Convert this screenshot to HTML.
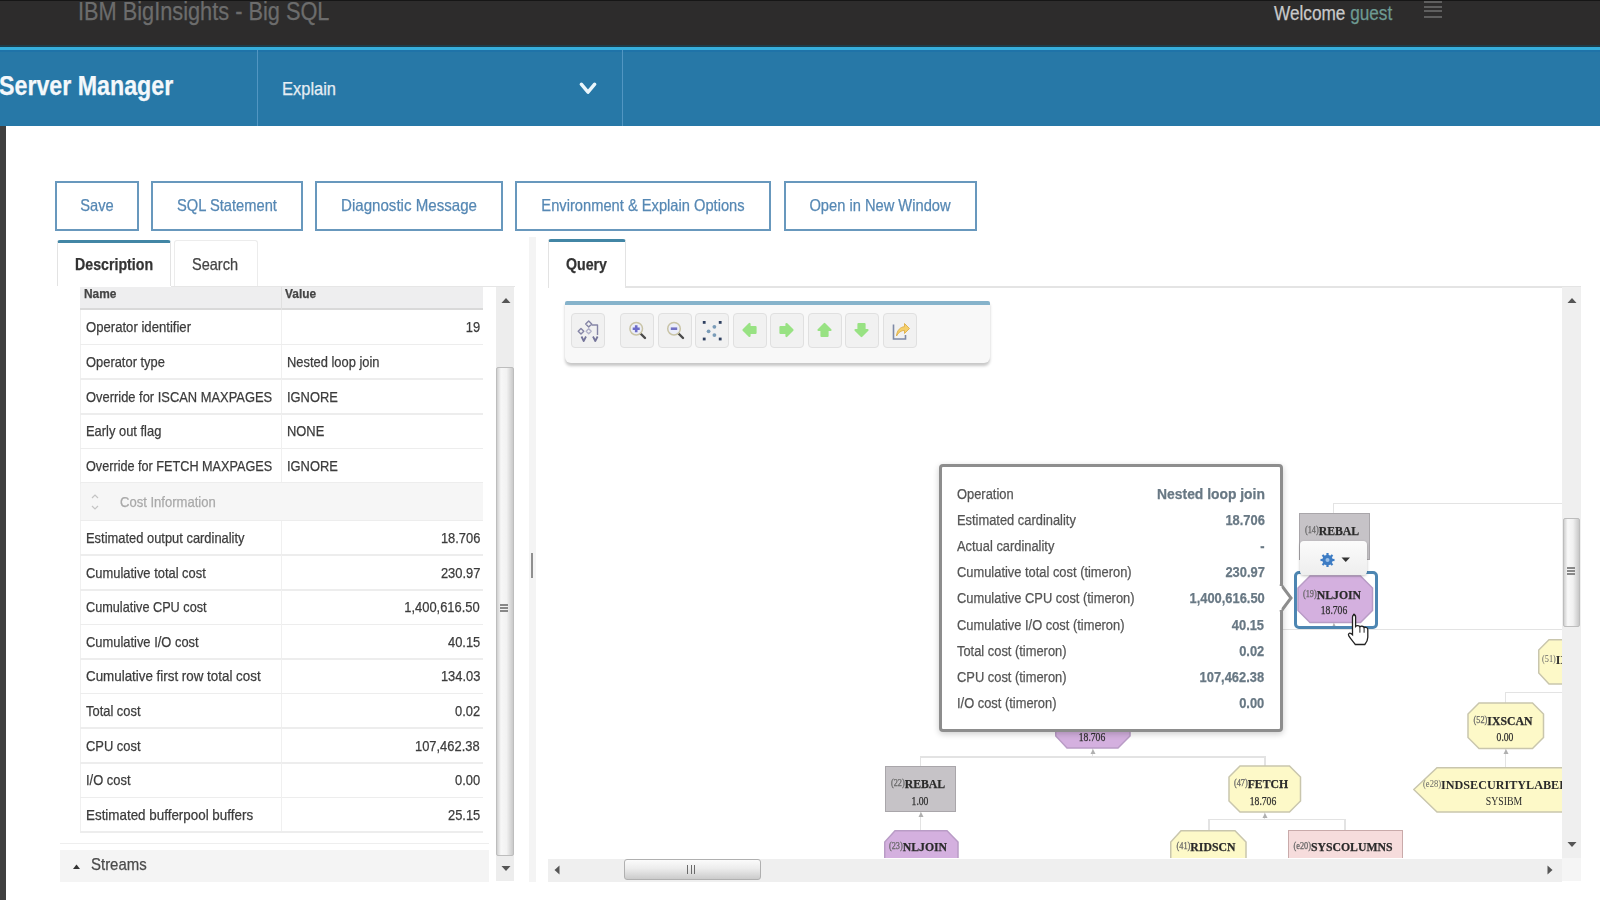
<!DOCTYPE html>
<html><head><meta charset="utf-8"><title>IBM BigInsights - Big SQL</title>
<style>
html,body{margin:0;padding:0;width:1600px;height:900px;overflow:hidden;background:#fff;}
body{position:relative;font-family:"Liberation Sans",sans-serif;}
.b{position:absolute;}
.t{position:absolute;white-space:nowrap;-webkit-text-stroke:0.25px currentColor;}
#wrap{position:absolute;left:0;top:0;width:1600px;height:900px;overflow:hidden;filter:blur(0.5px);}
</style></head><body><div id="wrap">
<div class="b" style="left:0px;top:0px;width:1600px;height:46px;background:#2d2c2c;"></div>
<div class="b" style="left:0px;top:44.5px;width:1600px;height:2.0px;background:#1d3d4a;"></div>
<div class="b" style="left:0px;top:46.5px;width:1600px;height:3.5px;background:#36afdd;"></div>
<div class="b" style="left:0px;top:50px;width:1600px;height:76px;background:#2778a7;"></div>
<div class="b" style="left:0px;top:50px;width:1600px;height:2px;background:#1f73a8;"></div>
<div class="b" style="left:257px;top:50px;width:1px;height:76px;background:#5296c2;"></div>
<div class="b" style="left:622px;top:50px;width:1px;height:76px;background:#5296c2;"></div>
<div class="b" style="left:0px;top:126px;width:6px;height:774px;background:#3f3f3f;"></div>
<div class="t" style="left:77.5px;top:-1.16px;font-size:25px;line-height:25px;color:#6c6c6c;font-weight:normal;font-family:'Liberation Sans',serif;transform:scaleX(0.87);transform-origin:left;">IBM BigInsights - Big SQL</div>
<div class="t" style="left:1274px;top:3.07px;font-size:20px;line-height:20px;color:#c9c9c9;font-weight:normal;font-family:'Liberation Sans',serif;transform:scaleX(0.86);transform-origin:left;">Welcome <span style="color:#6d9a92">guest</span></div>
<div class="b" style="left:1424px;top:1px;width:18px;height:2px;background:#5f5f5f;"></div>
<div class="b" style="left:1424px;top:6.2px;width:18px;height:1.9999999999999991px;background:#5f5f5f;"></div>
<div class="b" style="left:1424px;top:10.3px;width:18px;height:2.0px;background:#5f5f5f;"></div>
<div class="b" style="left:1424px;top:16px;width:18px;height:2px;background:#5f5f5f;"></div>
<div class="b" style="left:0px;top:0px;width:1600px;height:1px;background:#161616;"></div>
<div class="t" style="left:-1px;top:72.74px;font-size:27px;line-height:27px;color:#f4f8fb;font-weight:bold;font-family:'Liberation Sans',serif;transform:scaleX(0.86);transform-origin:left;">Server Manager</div>
<div class="t" style="left:282px;top:79.32px;font-size:19px;line-height:19px;color:#e6eef4;font-weight:normal;font-family:'Liberation Sans',serif;transform:scaleX(0.867);transform-origin:left;">Explain</div>
<svg class="b" style="left:577px;top:79px" width="22" height="18" viewBox="0 0 22 18"><polyline points="4.3,5.2 11,13.2 17.7,5.2" fill="none" stroke="#eaf6fc" stroke-width="3.4" stroke-linecap="round" stroke-linejoin="round"/></svg>
<div class="b" style="left:55px;top:181px;width:84px;height:50px;border:2px solid #6898bd;box-sizing:border-box;background:#fff;"></div>
<div class="t" style="left:97.0px;top:197.43px;font-size:16.5px;line-height:16.5px;color:#5688b4;font-weight:normal;font-family:'Liberation Sans',serif;transform:translateX(-50%) scaleX(0.89);transform-origin:center;">Save</div>
<div class="b" style="left:151px;top:181px;width:151.5px;height:50px;border:2px solid #6898bd;box-sizing:border-box;background:#fff;"></div>
<div class="t" style="left:226.75px;top:197.43px;font-size:16.5px;line-height:16.5px;color:#5688b4;font-weight:normal;font-family:'Liberation Sans',serif;transform:translateX(-50%) scaleX(0.89);transform-origin:center;">SQL Statement</div>
<div class="b" style="left:315px;top:181px;width:187.5px;height:50px;border:2px solid #6898bd;box-sizing:border-box;background:#fff;"></div>
<div class="t" style="left:408.75px;top:197.43px;font-size:16.5px;line-height:16.5px;color:#5688b4;font-weight:normal;font-family:'Liberation Sans',serif;transform:translateX(-50%) scaleX(0.915);transform-origin:center;">Diagnostic Message</div>
<div class="b" style="left:515px;top:181px;width:256px;height:50px;border:2px solid #6898bd;box-sizing:border-box;background:#fff;"></div>
<div class="t" style="left:643.0px;top:197.43px;font-size:16.5px;line-height:16.5px;color:#5688b4;font-weight:normal;font-family:'Liberation Sans',serif;transform:translateX(-50%) scaleX(0.89);transform-origin:center;">Environment &amp; Explain Options</div>
<div class="b" style="left:783.5px;top:181px;width:193.5px;height:50px;border:2px solid #6898bd;box-sizing:border-box;background:#fff;"></div>
<div class="t" style="left:880.25px;top:197.43px;font-size:16.5px;line-height:16.5px;color:#5688b4;font-weight:normal;font-family:'Liberation Sans',serif;transform:translateX(-50%) scaleX(0.89);transform-origin:center;">Open in New Window</div>
<div class="b" style="left:57px;top:240px;width:114px;height:48px;border:1px solid #e3e3e3;border-top:3px solid #4286a5;border-bottom:none;box-sizing:border-box;background:#fff;border-radius:3px 3px 0 0;"></div>
<div class="b" style="left:174px;top:240px;width:84px;height:47px;border:1px solid #ececec;border-bottom:none;box-sizing:border-box;background:#fff;border-radius:3px 3px 0 0;"></div>
<div class="b" style="left:57px;top:286px;width:458px;height:1px;background:#e6e6e6;"></div>
<div class="b" style="left:57px;top:286px;width:114px;height:2px;background:#fff;"></div>
<div class="t" style="left:74.75px;top:255.78px;font-size:16.5px;line-height:16.5px;color:#333;font-weight:bold;font-family:'Liberation Sans',serif;transform:scaleX(0.86);transform-origin:left;">Description</div>
<div class="t" style="left:192px;top:255.78px;font-size:16.5px;line-height:16.5px;color:#444;font-weight:normal;font-family:'Liberation Sans',serif;transform:scaleX(0.88);transform-origin:left;">Search</div>
<div class="b" style="left:80px;top:287px;width:403px;height:23px;background:#eeeeef;border-bottom:2px solid #d9d9d9;box-sizing:border-box;"></div>
<div class="b" style="left:281px;top:287px;width:1px;height:23px;background:#e0e0e0;"></div>
<div class="t" style="left:83.5px;top:287.07px;font-size:13.5px;line-height:13.5px;color:#444;font-weight:bold;font-family:'Liberation Sans',serif;transform:scaleX(0.88);transform-origin:left;">Name</div>
<div class="t" style="left:285px;top:287.07px;font-size:13.5px;line-height:13.5px;color:#444;font-weight:bold;font-family:'Liberation Sans',serif;transform:scaleX(0.88);transform-origin:left;">Value</div>
<div class="b" style="left:80px;top:310px;width:1px;height:521px;background:#f0f0f0;"></div>
<div class="b" style="left:281px;top:310.0px;width:1px;height:34.60000000000002px;background:#f0f0f0;"></div>
<div class="t" style="left:85.8px;top:320.48px;font-size:14.5px;line-height:14.5px;color:#3c3c3c;font-weight:normal;font-family:'Liberation Sans',serif;transform:scaleX(0.905);transform-origin:left;">Operator identifier</div>
<div class="t" style="right:1120px;top:320.48px;font-size:14.5px;line-height:14.5px;color:#3c3c3c;font-weight:normal;font-family:'Liberation Sans',serif;transform:scaleX(0.89);transform-origin:right;">19</div>
<div class="b" style="left:80px;top:343.85px;width:403px;height:1.5px;background:#ededed;"></div>
<div class="b" style="left:281px;top:344.6px;width:1px;height:34.60000000000002px;background:#f0f0f0;"></div>
<div class="t" style="left:85.8px;top:355.08px;font-size:14.5px;line-height:14.5px;color:#3c3c3c;font-weight:normal;font-family:'Liberation Sans',serif;transform:scaleX(0.89);transform-origin:left;">Operator type</div>
<div class="t" style="left:286.5px;top:355.08px;font-size:14.5px;line-height:14.5px;color:#3c3c3c;font-weight:normal;font-family:'Liberation Sans',serif;transform:scaleX(0.89);transform-origin:left;">Nested loop join</div>
<div class="b" style="left:80px;top:378.45000000000005px;width:403px;height:1.5px;background:#ededed;"></div>
<div class="b" style="left:281px;top:379.20000000000005px;width:1px;height:34.60000000000002px;background:#f0f0f0;"></div>
<div class="t" style="left:85.8px;top:389.68px;font-size:14.5px;line-height:14.5px;color:#3c3c3c;font-weight:normal;font-family:'Liberation Sans',serif;transform:scaleX(0.89);transform-origin:left;">Override for ISCAN MAXPAGES</div>
<div class="t" style="left:286.5px;top:389.68px;font-size:14.5px;line-height:14.5px;color:#3c3c3c;font-weight:normal;font-family:'Liberation Sans',serif;transform:scaleX(0.89);transform-origin:left;">IGNORE</div>
<div class="b" style="left:80px;top:413.05000000000007px;width:403px;height:1.5px;background:#ededed;"></div>
<div class="b" style="left:281px;top:413.80000000000007px;width:1px;height:34.60000000000002px;background:#f0f0f0;"></div>
<div class="t" style="left:85.8px;top:424.28px;font-size:14.5px;line-height:14.5px;color:#3c3c3c;font-weight:normal;font-family:'Liberation Sans',serif;transform:scaleX(0.89);transform-origin:left;">Early out flag</div>
<div class="t" style="left:286.5px;top:424.28px;font-size:14.5px;line-height:14.5px;color:#3c3c3c;font-weight:normal;font-family:'Liberation Sans',serif;transform:scaleX(0.89);transform-origin:left;">NONE</div>
<div class="b" style="left:80px;top:447.6500000000001px;width:403px;height:1.5px;background:#ededed;"></div>
<div class="b" style="left:281px;top:448.4000000000001px;width:1px;height:34.60000000000002px;background:#f0f0f0;"></div>
<div class="t" style="left:85.8px;top:458.88px;font-size:14.5px;line-height:14.5px;color:#3c3c3c;font-weight:normal;font-family:'Liberation Sans',serif;transform:scaleX(0.873);transform-origin:left;">Override for FETCH MAXPAGES</div>
<div class="t" style="left:286.5px;top:458.88px;font-size:14.5px;line-height:14.5px;color:#3c3c3c;font-weight:normal;font-family:'Liberation Sans',serif;transform:scaleX(0.89);transform-origin:left;">IGNORE</div>
<div class="b" style="left:80px;top:482.2500000000001px;width:403px;height:1.5px;background:#ededed;"></div>
<div class="b" style="left:81px;top:483.0000000000001px;width:402px;height:37.60000000000002px;background:#f6f6f6;"></div>
<div class="t" style="left:119.5px;top:495.23px;font-size:14.5px;line-height:14.5px;color:#a9a9a9;font-weight:normal;font-family:'Liberation Sans',serif;transform:scaleX(0.9);transform-origin:left;">Cost Information</div>
<svg class="b" style="left:89px;top:492.0px" width="12" height="20" viewBox="0 0 12 20"><polyline points="3,6 6,3 9,6" fill="none" stroke="#c4c4c4" stroke-width="1.2"/><polyline points="3,14 6,17 9,14" fill="none" stroke="#c4c4c4" stroke-width="1.2"/></svg>
<div class="b" style="left:80px;top:519.8500000000001px;width:403px;height:1.5px;background:#ededed;"></div>
<div class="b" style="left:281px;top:520.6000000000001px;width:1px;height:34.60000000000002px;background:#f0f0f0;"></div>
<div class="t" style="left:85.8px;top:531.08px;font-size:14.5px;line-height:14.5px;color:#3c3c3c;font-weight:normal;font-family:'Liberation Sans',serif;transform:scaleX(0.89);transform-origin:left;">Estimated output cardinality</div>
<div class="t" style="right:1120px;top:531.08px;font-size:14.5px;line-height:14.5px;color:#3c3c3c;font-weight:normal;font-family:'Liberation Sans',serif;transform:scaleX(0.89);transform-origin:right;">18.706</div>
<div class="b" style="left:80px;top:554.4500000000002px;width:403px;height:1.5px;background:#ededed;"></div>
<div class="b" style="left:281px;top:555.2000000000002px;width:1px;height:34.60000000000002px;background:#f0f0f0;"></div>
<div class="t" style="left:85.8px;top:565.68px;font-size:14.5px;line-height:14.5px;color:#3c3c3c;font-weight:normal;font-family:'Liberation Sans',serif;transform:scaleX(0.89);transform-origin:left;">Cumulative total cost</div>
<div class="t" style="right:1120px;top:565.68px;font-size:14.5px;line-height:14.5px;color:#3c3c3c;font-weight:normal;font-family:'Liberation Sans',serif;transform:scaleX(0.89);transform-origin:right;">230.97</div>
<div class="b" style="left:80px;top:589.0500000000002px;width:403px;height:1.5px;background:#ededed;"></div>
<div class="b" style="left:281px;top:589.8000000000002px;width:1px;height:34.60000000000002px;background:#f0f0f0;"></div>
<div class="t" style="left:85.8px;top:600.28px;font-size:14.5px;line-height:14.5px;color:#3c3c3c;font-weight:normal;font-family:'Liberation Sans',serif;transform:scaleX(0.875);transform-origin:left;">Cumulative CPU cost</div>
<div class="t" style="right:1120px;top:600.28px;font-size:14.5px;line-height:14.5px;color:#3c3c3c;font-weight:normal;font-family:'Liberation Sans',serif;transform:scaleX(0.89);transform-origin:right;">1,400,616.50</div>
<div class="b" style="left:80px;top:623.6500000000002px;width:403px;height:1.5px;background:#ededed;"></div>
<div class="b" style="left:281px;top:624.4000000000002px;width:1px;height:34.60000000000002px;background:#f0f0f0;"></div>
<div class="t" style="left:85.8px;top:634.88px;font-size:14.5px;line-height:14.5px;color:#3c3c3c;font-weight:normal;font-family:'Liberation Sans',serif;transform:scaleX(0.89);transform-origin:left;">Cumulative I/O cost</div>
<div class="t" style="right:1120px;top:634.88px;font-size:14.5px;line-height:14.5px;color:#3c3c3c;font-weight:normal;font-family:'Liberation Sans',serif;transform:scaleX(0.89);transform-origin:right;">40.15</div>
<div class="b" style="left:80px;top:658.2500000000002px;width:403px;height:1.5px;background:#ededed;"></div>
<div class="b" style="left:281px;top:659.0000000000002px;width:1px;height:34.60000000000002px;background:#f0f0f0;"></div>
<div class="t" style="left:85.8px;top:669.48px;font-size:14.5px;line-height:14.5px;color:#3c3c3c;font-weight:normal;font-family:'Liberation Sans',serif;transform:scaleX(0.922);transform-origin:left;">Cumulative first row total cost</div>
<div class="t" style="right:1120px;top:669.48px;font-size:14.5px;line-height:14.5px;color:#3c3c3c;font-weight:normal;font-family:'Liberation Sans',serif;transform:scaleX(0.89);transform-origin:right;">134.03</div>
<div class="b" style="left:80px;top:692.8500000000003px;width:403px;height:1.5px;background:#ededed;"></div>
<div class="b" style="left:281px;top:693.6000000000003px;width:1px;height:34.60000000000002px;background:#f0f0f0;"></div>
<div class="t" style="left:85.8px;top:704.08px;font-size:14.5px;line-height:14.5px;color:#3c3c3c;font-weight:normal;font-family:'Liberation Sans',serif;transform:scaleX(0.89);transform-origin:left;">Total cost</div>
<div class="t" style="right:1120px;top:704.08px;font-size:14.5px;line-height:14.5px;color:#3c3c3c;font-weight:normal;font-family:'Liberation Sans',serif;transform:scaleX(0.89);transform-origin:right;">0.02</div>
<div class="b" style="left:80px;top:727.4500000000003px;width:403px;height:1.5px;background:#ededed;"></div>
<div class="b" style="left:281px;top:728.2000000000003px;width:1px;height:34.60000000000002px;background:#f0f0f0;"></div>
<div class="t" style="left:85.8px;top:738.68px;font-size:14.5px;line-height:14.5px;color:#3c3c3c;font-weight:normal;font-family:'Liberation Sans',serif;transform:scaleX(0.89);transform-origin:left;">CPU cost</div>
<div class="t" style="right:1120px;top:738.68px;font-size:14.5px;line-height:14.5px;color:#3c3c3c;font-weight:normal;font-family:'Liberation Sans',serif;transform:scaleX(0.89);transform-origin:right;">107,462.38</div>
<div class="b" style="left:80px;top:762.0500000000003px;width:403px;height:1.5px;background:#ededed;"></div>
<div class="b" style="left:281px;top:762.8000000000003px;width:1px;height:34.60000000000002px;background:#f0f0f0;"></div>
<div class="t" style="left:85.8px;top:773.28px;font-size:14.5px;line-height:14.5px;color:#3c3c3c;font-weight:normal;font-family:'Liberation Sans',serif;transform:scaleX(0.89);transform-origin:left;">I/O cost</div>
<div class="t" style="right:1120px;top:773.28px;font-size:14.5px;line-height:14.5px;color:#3c3c3c;font-weight:normal;font-family:'Liberation Sans',serif;transform:scaleX(0.89);transform-origin:right;">0.00</div>
<div class="b" style="left:80px;top:796.6500000000003px;width:403px;height:1.5px;background:#ededed;"></div>
<div class="b" style="left:281px;top:797.4000000000003px;width:1px;height:34.60000000000002px;background:#f0f0f0;"></div>
<div class="t" style="left:85.8px;top:807.88px;font-size:14.5px;line-height:14.5px;color:#3c3c3c;font-weight:normal;font-family:'Liberation Sans',serif;transform:scaleX(0.924);transform-origin:left;">Estimated bufferpool buffers</div>
<div class="t" style="right:1120px;top:807.88px;font-size:14.5px;line-height:14.5px;color:#3c3c3c;font-weight:normal;font-family:'Liberation Sans',serif;transform:scaleX(0.89);transform-origin:right;">25.15</div>
<div class="b" style="left:80px;top:831.2500000000003px;width:403px;height:1.5px;background:#ededed;"></div>
<div class="b" style="left:496px;top:287px;width:18px;height:594px;background:#ededed;"></div>
<svg class="b" style="left:500px;top:295px" width="12" height="10"><polygon points="1.5,8 6,3 10.5,8" fill="#555"/></svg>
<svg class="b" style="left:500px;top:864px" width="12" height="10"><polygon points="1.5,2 6,7 10.5,2" fill="#555"/></svg>
<div class="b" style="left:496px;top:366.5px;width:18px;height:489.5px;background:linear-gradient(90deg,#cfcfcf,#f7f7f7 25%,#f2f2f2 60%,#c9c9c9);border:1px solid #bdbdbd;box-sizing:border-box;border-radius:2px;"></div>
<div class="b" style="left:500px;top:604px;width:8px;height:1.5px;background:#888;"></div>
<div class="b" style="left:500px;top:607px;width:8px;height:1.5px;background:#888;"></div>
<div class="b" style="left:500px;top:610px;width:8px;height:1.5px;background:#888;"></div>
<div class="b" style="left:60px;top:843px;width:429px;height:1px;background:#eeeeee;"></div>
<div class="b" style="left:60px;top:849.5px;width:429px;height:32.0px;background:#f4f4f4;"></div>
<svg class="b" style="left:71px;top:861px" width="12" height="10"><polygon points="2,8 5.5,3.5 9,8" fill="#333"/></svg>
<div class="t" style="left:90.7px;top:855.61px;font-size:17px;line-height:17px;color:#4a4a4a;font-weight:normal;font-family:'Liberation Sans',serif;transform:scaleX(0.88);transform-origin:left;">Streams</div>
<div class="b" style="left:528.5px;top:237px;width:7.0px;height:645px;background:#f4f4f4;"></div>
<div class="b" style="left:530.5px;top:553px;width:2.0px;height:25px;background:#8f8f8f;"></div>
<div class="b" style="left:548px;top:239px;width:78px;height:49px;border:1px solid #e3e3e3;border-top:3px solid #4286a5;border-bottom:none;box-sizing:border-box;background:#fff;border-radius:3px 3px 0 0;"></div>
<div class="b" style="left:625px;top:286px;width:956px;height:2px;background:#e4e4e4;"></div>
<div class="t" style="left:566px;top:255.53px;font-size:16.5px;line-height:16.5px;color:#333;font-weight:bold;font-family:'Liberation Sans',serif;transform:scaleX(0.86);transform-origin:left;">Query</div>
<div class="b" style="left:565px;top:301px;width:425px;height:62px;background:#f8f8f8;border-top:4px solid #86b3cb;box-sizing:border-box;box-shadow:0 3px 3px rgba(0,0,0,0.22);border-radius:2px 2px 6px 6px;"></div>
<div class="b" style="left:571px;top:312.5px;width:34px;height:35.0px;background:#f1f1f1;border:1px solid #e0e0e0;box-sizing:border-box;border-radius:4px;"></div>
<div class="b" style="left:620px;top:312.5px;width:34px;height:35.0px;background:#f1f1f1;border:1px solid #e0e0e0;box-sizing:border-box;border-radius:4px;"></div>
<div class="b" style="left:658px;top:312.5px;width:34px;height:35.0px;background:#f1f1f1;border:1px solid #e0e0e0;box-sizing:border-box;border-radius:4px;"></div>
<div class="b" style="left:695px;top:312.5px;width:34px;height:35.0px;background:#f1f1f1;border:1px solid #e0e0e0;box-sizing:border-box;border-radius:4px;"></div>
<div class="b" style="left:732.5px;top:312.5px;width:34.0px;height:35.0px;background:#f1f1f1;border:1px solid #e0e0e0;box-sizing:border-box;border-radius:4px;"></div>
<div class="b" style="left:770px;top:312.5px;width:34px;height:35.0px;background:#f1f1f1;border:1px solid #e0e0e0;box-sizing:border-box;border-radius:4px;"></div>
<div class="b" style="left:808px;top:312.5px;width:34px;height:35.0px;background:#f1f1f1;border:1px solid #e0e0e0;box-sizing:border-box;border-radius:4px;"></div>
<div class="b" style="left:845px;top:312.5px;width:34px;height:35.0px;background:#f1f1f1;border:1px solid #e0e0e0;box-sizing:border-box;border-radius:4px;"></div>
<div class="b" style="left:883px;top:312.5px;width:34px;height:35.0px;background:#f1f1f1;border:1px solid #e0e0e0;box-sizing:border-box;border-radius:4px;"></div>
<svg class="b" style="left:571px;top:312px" width="34" height="36" viewBox="0 0 34 36">
<g fill="none" stroke="#8585a6" stroke-width="1.4" stroke-linejoin="round">
<path d="M17.7 9 l3 3 l-3 3 l-3 -3z"/><path d="M10 16.5 l2.8 2.8 l-2.8 2.8 l-2.8 -2.8z"/><path d="M17.7 16.8 l2.5 2.5 l-2.5 2.5 l-2.5 -2.5z" stroke="#b0b0c8"/>
<path d="M20.5 13 h6 v10" /><path d="M10.5 24.5 l2.2 4.5 l2.3 -4.5 M22 24.5 l2.3 4.5 l2.3 -4.5" stroke="#75759a" stroke-width="1.8"/></g></svg>
<svg class="b" style="left:620px;top:312px" width="34" height="36" viewBox="0 0 34 36">
<line x1="20.5" y1="21.5" x2="25" y2="26" stroke="#4a4a4a" stroke-width="2.4" stroke-linecap="round"/>
<circle cx="16.2" cy="16.7" r="6.3" fill="#eceef8" stroke="#c9c4a6" stroke-width="1.5"/><path d="M16.2 13.2v7M12.7 16.7h7" stroke="#6c6cc8" stroke-width="2.6"/></svg>
<svg class="b" style="left:658px;top:312px" width="34" height="36" viewBox="0 0 34 36">
<line x1="20.5" y1="21.5" x2="25" y2="26" stroke="#4a4a4a" stroke-width="2.4" stroke-linecap="round"/>
<circle cx="16" cy="16.7" r="6.3" fill="#eceef8" stroke="#c9c4a6" stroke-width="1.5"/><path d="M12.8 16.7h6.4" stroke="#7272c4" stroke-width="2.6"/></svg>
<svg class="b" style="left:695px;top:312px" width="34" height="36" viewBox="0 0 34 36">
<g fill="#2f4060"><rect x="7.8" y="9" width="2.8" height="2.8"/><rect x="23.8" y="9" width="2.8" height="2.8"/><rect x="7.8" y="25.6" width="2.8" height="2.8"/><rect x="23.8" y="25.6" width="2.8" height="2.8"/></g>
<g fill="#7a9cb8"><circle cx="19.4" cy="14.8" r="1.9"/><circle cx="13.6" cy="19.3" r="1.9"/><circle cx="19.4" cy="23.1" r="1.9"/></g></svg>
<svg class="b" style="left:732.5px;top:312px" width="34" height="36" viewBox="0 0 34 36"><g transform="rotate(0 16.5 18)"><path d="M10.5 18 L16.5 12 L16.5 15 L22.5 15 L22.5 21 L16.5 21 L16.5 24 Z" fill="#98e283" stroke="#98e283" stroke-width="2.2" stroke-linejoin="round"/></g></svg>
<svg class="b" style="left:770px;top:312px" width="34" height="36" viewBox="0 0 34 36"><g transform="rotate(180 16.5 18)"><path d="M10.5 18 L16.5 12 L16.5 15 L22.5 15 L22.5 21 L16.5 21 L16.5 24 Z" fill="#98e283" stroke="#98e283" stroke-width="2.2" stroke-linejoin="round"/></g></svg>
<svg class="b" style="left:808px;top:312px" width="34" height="36" viewBox="0 0 34 36"><g transform="rotate(90 16.5 18)"><path d="M10.5 18 L16.5 12 L16.5 15 L22.5 15 L22.5 21 L16.5 21 L16.5 24 Z" fill="#98e283" stroke="#98e283" stroke-width="2.2" stroke-linejoin="round"/></g></svg>
<svg class="b" style="left:845px;top:312px" width="34" height="36" viewBox="0 0 34 36"><g transform="rotate(270 16.5 18)"><path d="M10.5 18 L16.5 12 L16.5 15 L22.5 15 L22.5 21 L16.5 21 L16.5 24 Z" fill="#98e283" stroke="#98e283" stroke-width="2.2" stroke-linejoin="round"/></g></svg>
<svg class="b" style="left:883px;top:312px" width="34" height="36" viewBox="0 0 34 36">
<path d="M10.5 12.5v14.5h12v-4" fill="none" stroke="#7d89a6" stroke-width="1.6"/><path d="M13.5 24c0.5-6 4-9 8-9.3v-3.2l5 5l-5 5v-3.1c-3.5 0-6 2-8 5.6z" fill="#f5cf6a" stroke="#dcae48" stroke-width="0.9" stroke-linejoin="round"/></svg>
<div class="b" style="left:1333px;top:502.5px;width:229px;height:1.5px;background:#e3e3e3;"></div>
<div class="b" style="left:1333px;top:503px;width:1px;height:10px;background:#e3e3e3;"></div>
<div class="b" style="left:1283px;top:628.5px;width:279px;height:1.5px;background:#e3e3e3;"></div>
<div class="b" style="left:1333px;top:622px;width:1px;height:7px;background:#e3e3e3;"></div>
<div class="b" style="left:1505px;top:691.5px;width:57px;height:1.5px;background:#e3e3e3;"></div>
<div class="b" style="left:1505px;top:692px;width:1px;height:11px;background:#e3e3e3;"></div>
<div class="b" style="left:1505px;top:748px;width:1px;height:19px;background:#e3e3e3;"></div>
<div class="b" style="left:919.5px;top:756px;width:345.5px;height:1.5px;background:#e3e3e3;"></div>
<div class="b" style="left:1092px;top:748px;width:1px;height:9px;background:#e3e3e3;"></div>
<div class="b" style="left:919.5px;top:756px;width:1.5px;height:10px;background:#e3e3e3;"></div>
<div class="b" style="left:1264px;top:756px;width:1.5px;height:10px;background:#e3e3e3;"></div>
<div class="b" style="left:920px;top:811px;width:1px;height:18.5px;background:#e3e3e3;"></div>
<div class="b" style="left:1264px;top:811px;width:1px;height:8px;background:#e3e3e3;"></div>
<div class="b" style="left:1208px;top:818.5px;width:137px;height:1.5px;background:#e3e3e3;"></div>
<div class="b" style="left:1208px;top:819px;width:1.5px;height:10.5px;background:#e3e3e3;"></div>
<div class="b" style="left:1344px;top:819px;width:1.5px;height:10.5px;background:#e3e3e3;"></div>
<svg class="b" style="left:1089.5px;top:749px" width="6" height="6"><polygon points="3,0 5.5,5 0.5,5" fill="#b0b0b0"/></svg>
<svg class="b" style="left:917.5px;top:812px" width="6" height="6"><polygon points="3,0 5.5,5 0.5,5" fill="#b0b0b0"/></svg>
<svg class="b" style="left:1261.5px;top:812.5px" width="6" height="6"><polygon points="3,0 5.5,5 0.5,5" fill="#b0b0b0"/></svg>
<svg class="b" style="left:1502.5px;top:749px" width="6" height="6"><polygon points="3,0 5.5,5 0.5,5" fill="#b0b0b0"/></svg>
<svg class="b" style="left:1330.5px;top:623px" width="6" height="6"><polygon points="3,0 5.5,5 0.5,5" fill="#b0b0b0"/></svg>
<div class="b" style="left:549px;top:288px;width:1013px;height:570px;overflow:hidden">
</div>
<div class="b" style="left:1298.5px;top:513px;width:71.0px;height:47px;background:#c6c3c7;border:1px solid #a9a6aa;box-sizing:border-box;"></div>
<div class="t" style="left:1331.5px;top:524.19px;font-size:13.5px;line-height:13.5px;color:#2a2a2a;font-weight:bold;font-family:'Liberation Serif',serif;transform:translateX(-50%) scaleX(0.87);transform-origin:center;"><span style="font-size:9.5px;font-weight:normal;color:#666;vertical-align:2px">(14)</span>REBAL</div>
<div class="b" style="left:1293.5px;top:570.5px;width:84.0px;height:58.0px;border:3px solid #4d86b2;box-sizing:border-box;border-radius:5px;"></div>
<svg class="b" style="left:1297.5px;top:575.5px;overflow:visible" width="74.5" height="46.5"><polygon points="12,0 62.5,0 74.5,12 74.5,34.5 62.5,46.5 12,46.5 0,34.5 0,12" fill="#d4b0df" stroke="#b99cc6" stroke-width="1.5"/></svg>
<div class="t" style="left:1331.5px;top:587.69px;font-size:13.5px;line-height:13.5px;color:#2a2a2a;font-weight:bold;font-family:'Liberation Serif',serif;transform:translateX(-50%) scaleX(0.87);transform-origin:center;"><span style="font-size:9.5px;font-weight:normal;color:#666;vertical-align:2px">(19)</span>NLJOIN</div>
<div class="t" style="left:1334px;top:605.37px;font-size:11.5px;line-height:11.5px;color:#2e2e2e;font-weight:normal;font-family:'Liberation Serif',serif;transform:translateX(-50%) scaleX(0.84);transform-origin:center;">18.706</div>
<div class="b" style="left:1300px;top:541px;width:67px;height:34px;background:linear-gradient(#fbfbfb,#eeeeee);border-radius:4px;box-shadow:0 1px 3px rgba(0,0,0,.25);"></div>
<svg class="b" style="left:1318px;top:551px" width="36" height="18" viewBox="0 0 36 18">
<g fill="#3d7cc4"><circle cx="9.5" cy="9" r="5.2"/><g stroke="#3d7cc4" stroke-width="2.2"><line x1="9.5" y1="2" x2="9.5" y2="16"/><line x1="2.5" y1="9" x2="16.5" y2="9"/><line x1="4.5" y1="4" x2="14.5" y2="14"/><line x1="14.5" y1="4" x2="4.5" y2="14"/></g></g>
<circle cx="9.5" cy="9" r="2" fill="#9cc0e8"/><polygon points="23.5,6.5 32,6.5 27.75,11" fill="#333"/></svg>
<div class="b" style="left:1530px;top:630px;width:32px;height:60px;overflow:hidden">
<svg style="position:absolute;left:8px;top:9px" width="80" height="46"><polygon points="11,0.75 79,0.75 79,45 11,45 0.75,34 0.75,11" fill="#fdf9c8" stroke="#c9c6ad" stroke-width="1.5"/></svg>
<div style="position:absolute;left:12px;top:22px;font-family:'Liberation Serif',serif;font-size:13.5px;font-weight:bold;color:#2a2a2a;white-space:nowrap;transform:scaleX(.87);transform-origin:left"><span style="font-size:9.5px;font-weight:normal;color:#666;vertical-align:2px">(51)</span>IXSCAN</div>
</div>
<svg class="b" style="left:1467.5px;top:703px;overflow:visible" width="75.5" height="45.5"><polygon points="11,0 64.5,0 75.5,11 75.5,34.5 64.5,45.5 11,45.5 0,34.5 0,11" fill="#fdf9c8" stroke="#c9c6ad" stroke-width="1.5"/></svg>
<div class="t" style="left:1502.5px;top:714.19px;font-size:13.5px;line-height:13.5px;color:#2a2a2a;font-weight:bold;font-family:'Liberation Serif',serif;transform:translateX(-50%) scaleX(0.87);transform-origin:center;"><span style="font-size:9.5px;font-weight:normal;color:#666;vertical-align:2px">(52)</span>IXSCAN</div>
<div class="t" style="left:1505px;top:732.37px;font-size:11.5px;line-height:11.5px;color:#2e2e2e;font-weight:normal;font-family:'Liberation Serif',serif;transform:translateX(-50%) scaleX(0.84);transform-origin:center;">0.00</div>
<div class="b" style="left:1400px;top:760px;width:162px;height:60px;overflow:hidden">
<svg style="position:absolute;left:13px;top:6.5px" width="200" height="46"><polygon points="24,0.75 200,0.75 200,45 24,45 0.75,22.5" fill="#fdf9c8" stroke="#c9c6ad" stroke-width="1.5"/></svg>
<div style="position:absolute;left:23px;top:17px;font-family:'Liberation Serif',serif;font-size:13.5px;font-weight:bold;color:#2a2a2a;white-space:nowrap;transform:scaleX(.9);transform-origin:left"><span style="font-size:9.5px;font-weight:normal;color:#666;vertical-align:2px">(e28)</span>INDSECURITYLABEL</div>
<div style="position:absolute;left:104px;top:35px;font-family:'Liberation Serif',serif;font-size:11.5px;color:#2e2e2e;white-space:nowrap;transform:translateX(-50%) scaleX(.85);">SYSIBM</div>
</div>
<div class="b" style="left:885px;top:766px;width:70.5px;height:45.5px;background:#c6c3c7;border:1px solid #a9a6aa;box-sizing:border-box;"></div>
<div class="t" style="left:917.5px;top:777.29px;font-size:13.5px;line-height:13.5px;color:#2a2a2a;font-weight:bold;font-family:'Liberation Serif',serif;transform:translateX(-50%) scaleX(0.87);transform-origin:center;"><span style="font-size:9.5px;font-weight:normal;color:#666;vertical-align:2px">(22)</span>REBAL</div>
<div class="t" style="left:920px;top:796.17px;font-size:11.5px;line-height:11.5px;color:#2e2e2e;font-weight:normal;font-family:'Liberation Serif',serif;transform:translateX(-50%) scaleX(0.84);transform-origin:center;">1.00</div>
<svg class="b" style="left:1228.5px;top:766px;overflow:visible" width="71.5" height="46"><polygon points="11,0 60.5,0 71.5,11 71.5,35 60.5,46 11,46 0,35 0,11" fill="#fdf9c8" stroke="#c9c6ad" stroke-width="1.5"/></svg>
<div class="t" style="left:1260.5px;top:777.39px;font-size:13.5px;line-height:13.5px;color:#2a2a2a;font-weight:bold;font-family:'Liberation Serif',serif;transform:translateX(-50%) scaleX(0.87);transform-origin:center;"><span style="font-size:9.5px;font-weight:normal;color:#666;vertical-align:2px">(47)</span>FETCH</div>
<div class="t" style="left:1263px;top:796.37px;font-size:11.5px;line-height:11.5px;color:#2e2e2e;font-weight:normal;font-family:'Liberation Serif',serif;transform:translateX(-50%) scaleX(0.84);transform-origin:center;">18.706</div>
<div class="b" style="left:860px;top:820px;width:600px;height:38px;overflow:hidden">
<svg style="position:absolute;left:24px;top:9.5px" width="75" height="60"><polygon points="11,0.75 63,0.75 74,12 74,60 0.75,60 0.75,12" fill="#d4b0df" stroke="#b99cc6" stroke-width="1.5"/></svg>
<svg style="position:absolute;left:310px;top:9.5px" width="77" height="60"><polygon points="11,0.75 65,0.75 76,12 76,60 0.75,60 0.75,12" fill="#fdf9c8" stroke="#c9c6ad" stroke-width="1.5"/></svg>
<div style="position:absolute;left:427.5px;top:9.5px;width:115.5px;height:60px;background:#f6dcdc;border:1px solid #c9aaaa;box-sizing:border-box"></div>
</div>
<div class="t" style="left:917.5px;top:839.69px;font-size:13.5px;line-height:13.5px;color:#2a2a2a;font-weight:bold;font-family:'Liberation Serif',serif;transform:translateX(-50%) scaleX(0.87);transform-origin:center;"><span style="font-size:9.5px;font-weight:normal;color:#666;vertical-align:2px">(23)</span>NLJOIN</div>
<div class="t" style="left:1205.5px;top:840.19px;font-size:13.5px;line-height:13.5px;color:#2a2a2a;font-weight:bold;font-family:'Liberation Serif',serif;transform:translateX(-50%) scaleX(0.87);transform-origin:center;"><span style="font-size:9.5px;font-weight:normal;color:#666;vertical-align:2px">(41)</span>RIDSCN</div>
<div class="t" style="left:1342.5px;top:840.19px;font-size:13.5px;line-height:13.5px;color:#2a2a2a;font-weight:bold;font-family:'Liberation Serif',serif;transform:translateX(-50%) scaleX(0.87);transform-origin:center;"><span style="font-size:9.5px;font-weight:normal;color:#666;vertical-align:2px">(e20)</span>SYSCOLUMNS</div>
<svg class="b" style="left:1055px;top:700px" width="76" height="49"><polygon points="0.75,0.75 75,0.75 75,36 63,48 12,48 0.75,36" fill="#d4b0df" stroke="#b99cc6" stroke-width="1.5"/></svg>
<div class="t" style="left:1092px;top:732.37px;font-size:11.5px;line-height:11.5px;color:#2e2e2e;font-weight:normal;font-family:'Liberation Serif',serif;transform:translateX(-50%) scaleX(0.84);transform-origin:center;">18.706</div>
<div class="b" style="left:939px;top:463.5px;width:344px;height:268px;background:#fff;border:3px solid #8d8d8d;box-sizing:border-box;border-radius:4px;box-shadow:0 2px 6px rgba(0,0,0,0.2);"></div>
<svg class="b" style="left:1279px;top:584px" width="16" height="30"><polyline points="1.5,0 12,14 1.5,28" fill="#fff" stroke="#8d8d8d" stroke-width="3"/><rect x="0" y="2" width="2.5" height="24" fill="#fff"/></svg>
<div class="t" style="left:957.2px;top:486.65px;font-size:14px;line-height:14px;color:#555;font-weight:normal;font-family:'Liberation Sans',serif;transform:scaleX(0.92);transform-origin:left;">Operation</div>
<div class="t" style="right:335.5px;top:486.65px;font-size:14px;line-height:14px;color:#687884;font-weight:bold;font-family:'Liberation Sans',serif;transform:scaleX(0.99);transform-origin:right;">Nested loop join</div>
<div class="t" style="left:957.2px;top:512.85px;font-size:14px;line-height:14px;color:#555;font-weight:normal;font-family:'Liberation Sans',serif;transform:scaleX(0.92);transform-origin:left;">Estimated cardinality</div>
<div class="t" style="right:335.5px;top:512.85px;font-size:14px;line-height:14px;color:#687884;font-weight:bold;font-family:'Liberation Sans',serif;transform:scaleX(0.92);transform-origin:right;">18.706</div>
<div class="t" style="left:957.2px;top:539.05px;font-size:14px;line-height:14px;color:#555;font-weight:normal;font-family:'Liberation Sans',serif;transform:scaleX(0.92);transform-origin:left;">Actual cardinality</div>
<div class="t" style="right:335.5px;top:539.05px;font-size:14px;line-height:14px;color:#687884;font-weight:bold;font-family:'Liberation Sans',serif;transform:scaleX(0.92);transform-origin:right;">-</div>
<div class="t" style="left:957.2px;top:565.25px;font-size:14px;line-height:14px;color:#555;font-weight:normal;font-family:'Liberation Sans',serif;transform:scaleX(0.92);transform-origin:left;">Cumulative total cost (timeron)</div>
<div class="t" style="right:335.5px;top:565.25px;font-size:14px;line-height:14px;color:#687884;font-weight:bold;font-family:'Liberation Sans',serif;transform:scaleX(0.92);transform-origin:right;">230.97</div>
<div class="t" style="left:957.2px;top:591.45px;font-size:14px;line-height:14px;color:#555;font-weight:normal;font-family:'Liberation Sans',serif;transform:scaleX(0.92);transform-origin:left;">Cumulative CPU cost (timeron)</div>
<div class="t" style="right:335.5px;top:591.45px;font-size:14px;line-height:14px;color:#687884;font-weight:bold;font-family:'Liberation Sans',serif;transform:scaleX(0.92);transform-origin:right;">1,400,616.50</div>
<div class="t" style="left:957.2px;top:617.65px;font-size:14px;line-height:14px;color:#555;font-weight:normal;font-family:'Liberation Sans',serif;transform:scaleX(0.92);transform-origin:left;">Cumulative I/O cost (timeron)</div>
<div class="t" style="right:335.5px;top:617.65px;font-size:14px;line-height:14px;color:#687884;font-weight:bold;font-family:'Liberation Sans',serif;transform:scaleX(0.92);transform-origin:right;">40.15</div>
<div class="t" style="left:957.2px;top:643.85px;font-size:14px;line-height:14px;color:#555;font-weight:normal;font-family:'Liberation Sans',serif;transform:scaleX(0.92);transform-origin:left;">Total cost (timeron)</div>
<div class="t" style="right:335.5px;top:643.85px;font-size:14px;line-height:14px;color:#687884;font-weight:bold;font-family:'Liberation Sans',serif;transform:scaleX(0.92);transform-origin:right;">0.02</div>
<div class="t" style="left:957.2px;top:670.05px;font-size:14px;line-height:14px;color:#555;font-weight:normal;font-family:'Liberation Sans',serif;transform:scaleX(0.92);transform-origin:left;">CPU cost (timeron)</div>
<div class="t" style="right:335.5px;top:670.05px;font-size:14px;line-height:14px;color:#687884;font-weight:bold;font-family:'Liberation Sans',serif;transform:scaleX(0.92);transform-origin:right;">107,462.38</div>
<div class="t" style="left:957.2px;top:696.25px;font-size:14px;line-height:14px;color:#555;font-weight:normal;font-family:'Liberation Sans',serif;transform:scaleX(0.92);transform-origin:left;">I/O cost (timeron)</div>
<div class="t" style="right:335.5px;top:696.25px;font-size:14px;line-height:14px;color:#687884;font-weight:bold;font-family:'Liberation Sans',serif;transform:scaleX(0.92);transform-origin:right;">0.00</div>
<svg class="b" style="left:1346px;top:612px" width="26" height="34" viewBox="0 0 26 34">
<path d="M7 2.5c1.6 0 2.6 1 2.6 2.6v9.2c.6-.8 3.8-1 4.3.4c.8-.7 3.6-.8 4.2.8c1-.5 3.7-.2 3.7 2.2v7.5c0 3-1.6 5.5-3 7.3h-9.5c-1.5-2-5-6.3-6.5-8.7c-1-1.6.4-3.4 2.3-2.2l1.4 1.2V5.1c0-1.6 1-2.6 2.5-2.6z" fill="#fff" stroke="#222" stroke-width="1.3"/>
<path d="M13.9 14.7v6M18.1 15.5v5.2" stroke="#222" stroke-width="1"/></svg>
<div class="b" style="left:1562px;top:287px;width:19px;height:571px;background:#efefef;"></div>
<svg class="b" style="left:1566px;top:295px" width="12" height="10"><polygon points="1.5,8 6,3 10.5,8" fill="#555"/></svg>
<svg class="b" style="left:1566px;top:840px" width="12" height="10"><polygon points="1.5,2 6,7 10.5,2" fill="#555"/></svg>
<div class="b" style="left:1563px;top:518px;width:17px;height:109px;background:linear-gradient(90deg,#d0d0d0,#f8f8f8 25%,#f1f1f1 60%,#c8c8c8);border:1px solid #bdbdbd;box-sizing:border-box;border-radius:2px;"></div>
<div class="b" style="left:1567px;top:567px;width:8px;height:1.5px;background:#888;"></div>
<div class="b" style="left:1567px;top:570px;width:8px;height:1.5px;background:#888;"></div>
<div class="b" style="left:1567px;top:573px;width:8px;height:1.5px;background:#888;"></div>
<div class="b" style="left:548px;top:858.5px;width:1014px;height:23.0px;background:#efefef;"></div>
<div class="b" style="left:1562px;top:858px;width:19px;height:23px;background:#f5f5f5;"></div>
<svg class="b" style="left:552px;top:864px" width="10" height="12"><polygon points="7.5,1.5 2.5,6 7.5,10.5" fill="#555"/></svg>
<svg class="b" style="left:1545px;top:864px" width="10" height="12"><polygon points="2.5,1.5 7.5,6 2.5,10.5" fill="#555"/></svg>
<div class="b" style="left:623.5px;top:859px;width:137.5px;height:20.5px;background:linear-gradient(#fbfbfb,#ececec 45%,#cbcbcb);border:1px solid #b0b0b0;box-sizing:border-box;border-radius:3px;"></div>
<div class="b" style="left:687px;top:864.5px;width:1.2999999999999545px;height:9.0px;background:#6a6a6a;"></div>
<div class="b" style="left:690.5px;top:864.5px;width:1.2999999999999545px;height:9.0px;background:#6a6a6a;"></div>
<div class="b" style="left:694px;top:864.5px;width:1.2999999999999545px;height:9.0px;background:#6a6a6a;"></div>
</div></body></html>
